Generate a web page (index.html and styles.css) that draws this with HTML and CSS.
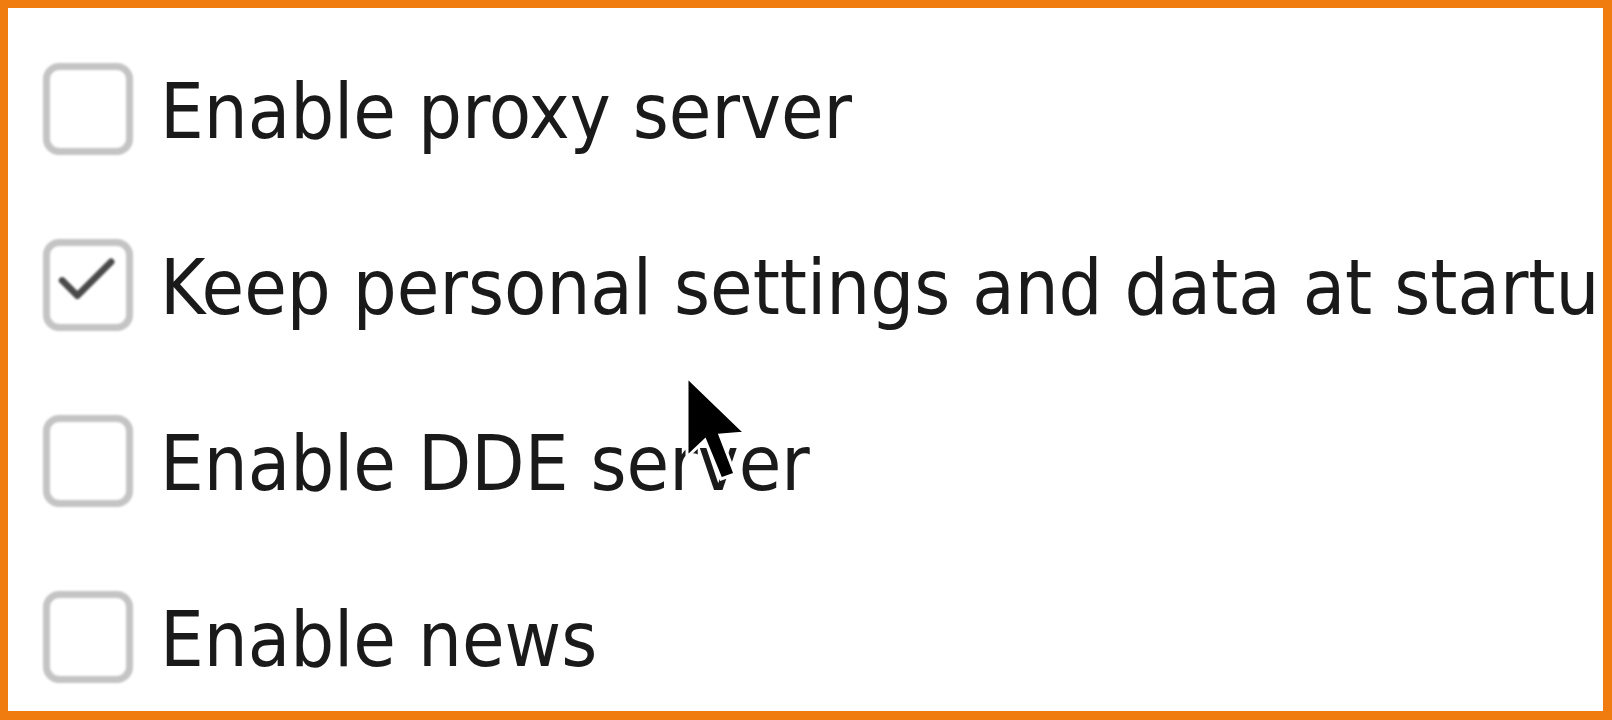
FILE: index.html
```html
<!DOCTYPE html>
<html>
<head>
<meta charset="utf-8">
<link rel="stylesheet" href="styles.css">
</head>
<body>
<div class="frame">
  <div class="options">
    <div class="option">
      <span class="box"></span>
      <span class="label">Enable proxy server</span>
    </div>
    <div class="option">
      <span class="box checked">
        <svg class="tick" viewBox="0 0 90 90" width="90" height="90"><path d="M12 42 L30 60 L70 20" fill="none" stroke="#4a4a4a" stroke-width="8" stroke-linecap="round" stroke-linejoin="round"/></svg>
      </span>
      <span class="label">Keep personal settings and data at startup</span>
    </div>
    <div class="option">
      <span class="box"></span>
      <span class="label">Enable DDE server</span>
    </div>
    <div class="option">
      <span class="box"></span>
      <span class="label">Enable news</span>
    </div>
  </div>
  <svg class="cursor" viewBox="0 0 64 110" width="64" height="110"><path d="M2 2 L2 82 L20 65 L36 104 L50 99 L35 60 L60 58 Z" fill="#000" stroke="#fff" stroke-width="3" stroke-linejoin="miter"/></svg>
</div>
</body>
</html>
```
FILE: styles.css
```css
html, body {
  margin: 0;
  padding: 0;
  background: #fff;
}
.frame {
  position: relative;
  width: 1612px;
  height: 720px;
  box-sizing: border-box;
  border-style: solid;
  border-color: #f07c10;
  border-width: 8px 9px 9px 8px;
  background: #fff;
  overflow: hidden;
}
.options {
  display: flex;
  flex-direction: column;
  gap: 84px;
  padding: 55px 0 0 35px;
}
.option {
  display: flex;
  align-items: center;
  gap: 27px;
  height: 92px;
  white-space: nowrap;
}
.box {
  flex: none;
  position: relative;
  width: 90px;
  height: 92px;
  box-sizing: border-box;
  border: 7px solid #c4c4c4;
  border-radius: 16px;
  background: #fff;
  filter: blur(1px);
}
.tick {
  position: absolute;
  left: 2px;
  top: -1px;
  width: 76px;
  height: 76px;
}
.label {
  font-family: "DejaVu Sans Condensed", "DejaVu Sans", sans-serif;
  font-stretch: condensed;
  font-size: 77px;
  line-height: 80px;
  color: #1a1a1a;
  padding-top: 6px;
  filter: blur(0.7px);
}
.cursor {
  position: absolute;
  left: 677px;
  top: 367px;
}
```
